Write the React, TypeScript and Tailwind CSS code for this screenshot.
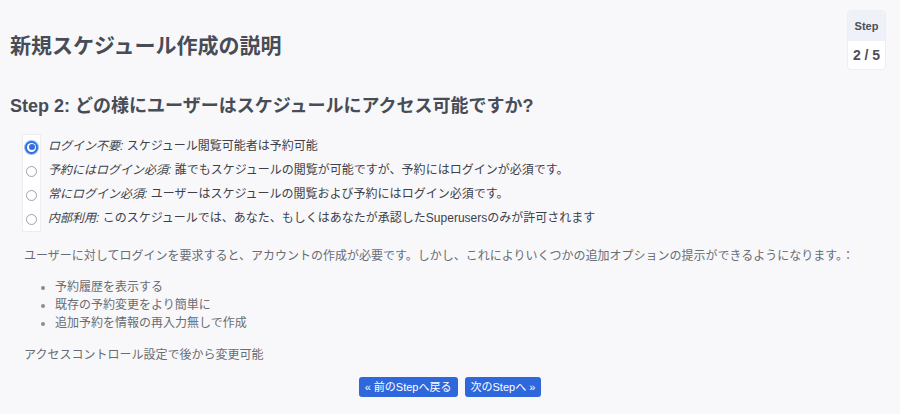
import React from "react";

const font = { fontFamily: '"Liberation Sans", "Noto Sans CJK JP", sans-serif' };

function Radio({ checked }: { checked?: boolean }) {
  if (checked) {
    return (
      <span className="flex h-[13px] w-[13px] items-center justify-center rounded-full bg-[#2f6fe0] shadow-[0_0_0_1px_#9dbcf2]">
        <span className="flex h-[9px] w-[9px] items-center justify-center rounded-full bg-white">
          <span className="h-[6px] w-[6px] rounded-full bg-[#2f6fe0]" />
        </span>
      </span>
    );
  }
  return <span className="h-[11px] w-[11px] rounded-full border border-[#a2a2a8] bg-white" />;
}

const options = [
  { label: "ログイン不要", text: "スケジュール閲覧可能者は予約可能", checked: true },
  { label: "予約にはログイン必須", text: "誰でもスケジュールの閲覧が可能ですが、予約にはログインが必須です。" },
  { label: "常にログイン必須", text: "ユーザーはスケジュールの閲覧および予約にはログイン必須です。" },
  { label: "内部利用", text: "このスケジュールでは、あなた、もしくはあなたが承認したSuperusersのみが許可されます" },
];

export default function App() {
  return (
    <div className="min-h-screen w-[900px] bg-[#f8f8fa]" style={font}>
      <div className="flex items-start justify-between pl-[10px] pr-[14px] pt-[10px]">
        <h1 className="mt-[24px] text-[21px] font-bold leading-[24px] text-[#474c57]">新規スケジュール作成の説明</h1>
        <div className="w-[39px] overflow-hidden rounded-[4px] border border-[#edeef2] bg-white text-[#4a4f59]">
          <div className="flex h-[30px] items-center justify-center bg-[#eef1f7] text-[11px] font-bold">Step</div>
          <div className="flex h-[28px] items-center justify-center text-[14px] font-bold">2 / 5</div>
        </div>
      </div>

      <h2 className="mt-[24px] pl-[10px] text-[18px] font-bold leading-[24px] text-[#474c57]">
        Step 2: どの様にユーザーはスケジュールにアクセス可能ですか?
      </h2>

      <div className="ml-[22px] mt-[16px] flex">
        <div className="flex w-[19px] flex-col border border-[#ededf1] bg-white">
          {options.map((o, i) => (
            <div key={i} className="flex h-[24px] items-center justify-center">
              <Radio checked={o.checked} />
            </div>
          ))}
        </div>
        <div className="ml-[7px] flex flex-col">
          {options.map((o, i) => (
            <div key={i} className="flex h-[24px] items-center whitespace-nowrap text-[12px] text-[#3d4149]">
              <span className="italic">{o.label}:</span>
              <span>&nbsp;{o.text}</span>
            </div>
          ))}
        </div>
      </div>

      <p className="mt-[15px] pl-[24px] text-[12px] leading-[18px] text-[#686c73]">
        ユーザーに対してログインを要求すると、アカウントの作成が必要です。しかし、これによりいくつかの追加オプションの提示ができるようになります。：
      </p>

      <ul className="mt-[13px] list-disc pl-[55px] text-[12px] leading-[18px] text-[#686c73] marker:text-[#8a8d93]">
        <li>予約履歴を表示する</li>
        <li>既存の予約変更をより簡単に</li>
        <li>追加予約を情報の再入力無しで作成</li>
      </ul>

      <p className="mt-[14px] pl-[24px] text-[12px] leading-[18px] text-[#686c73]">アクセスコントロール設定で後から変更可能</p>

      <div className="mt-[13px] flex justify-center gap-[7px]">
        <button className="h-[20px] rounded-[3px] bg-[#2f68dc] px-[6px] text-[11px] text-white">« 前のStepへ戻る</button>
        <button className="h-[20px] rounded-[3px] bg-[#2f68dc] px-[6px] text-[11px] text-white">次のStepへ »</button>
      </div>
    </div>
  );
}
